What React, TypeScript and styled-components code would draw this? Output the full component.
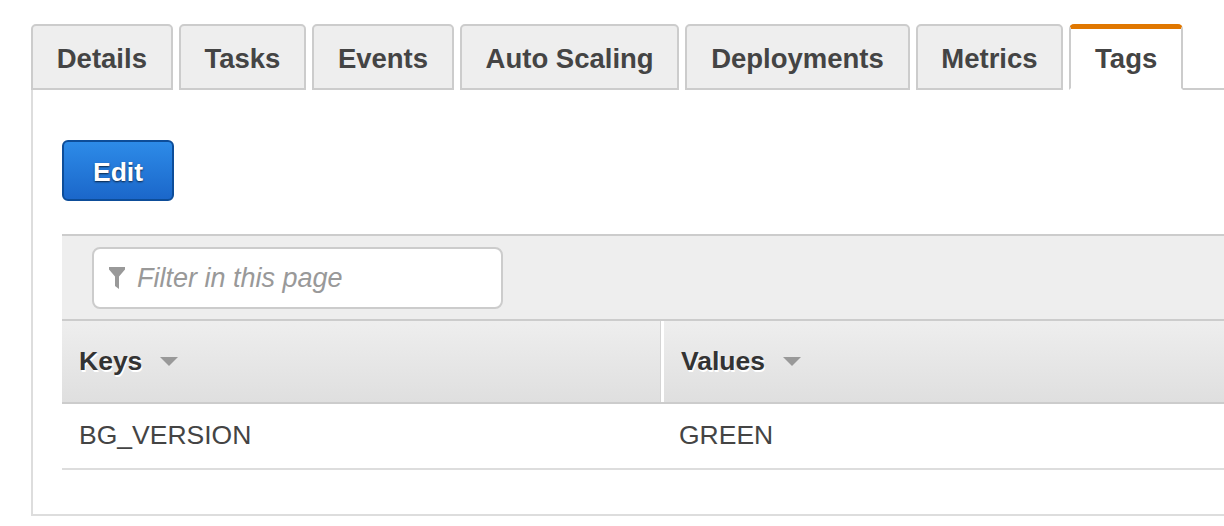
import React from "react";
import styled, { createGlobalStyle } from "styled-components";

const Global = createGlobalStyle`
  html, body { margin: 0; padding: 0; background: #fff; }
  body { width: 1224px; height: 526px; overflow: hidden; font-family: "Liberation Sans", Arial, sans-serif; }
  * { box-sizing: border-box; }
`;

const Page = styled.div`
  padding: 24px 0 0 31px;
  width: 1224px;
`;

const TabBar = styled.div`
  display: flex;
  align-items: stretch;
  height: 66px;
`;

const Tab = styled.div<{ $active?: boolean }>`
  display: flex;
  align-items: center;
  justify-content: center;
  padding: 0 23.75px;
  margin-right: 6px;
  font-size: 27.5px;
  font-weight: bold;
  color: #444;
  background: ${(p) => (p.$active ? "#fff" : "#eee")};
  border: 2px solid #ccc;
  border-top: ${(p) => (p.$active ? "5px solid #e07700" : "2px solid #ccc")};
  border-bottom: ${(p) => (p.$active ? "2px solid #fff" : "2px solid #ccc")};
  border-radius: 5px 5px 0 0;
  padding-top: ${(p) => (p.$active ? "0px" : "3px")};
  line-height: 1;
`;

const Filler = styled.div`
  flex: 1;
  margin-left: -6px;
  border-bottom: 2px solid #ccc;
`;

const Panel = styled.div`
  border-left: 2px solid #ddd;
  border-bottom: 2px solid #ddd;
  padding: 50px 0 44px 29px;
`;

const EditButton = styled.button`
  display: flex;
  align-items: center;
  justify-content: center;
  width: 112px;
  height: 61px;
  border: 2px solid #0d4d99;
  border-radius: 6px;
  background: linear-gradient(#2d8be8, #1b67ca);
  color: #fff;
  font-family: "Liberation Sans", Arial, sans-serif;
  font-size: 26.5px;
  font-weight: bold;
  text-shadow: 0 1px 2px rgba(0, 0, 0, 0.7);
  padding: 4px 0 0;
`;

const Table = styled.div`
  margin-top: 33px;
`;

const FilterBar = styled.div`
  background: #eee;
  border-top: 2px solid #ccc;
  border-bottom: 2px solid #ccc;
  padding: 11px 30px 10px;
`;

const FilterInput = styled.div`
  display: flex;
  align-items: center;
  gap: 12px;
  width: 411px;
  height: 62px;
  background: #fff;
  border: 2px solid #ccc;
  border-radius: 8px;
  padding: 0 0 0 15px;
  color: #999;
  font-size: 27px;
  font-style: italic;
`;

const HeaderRow = styled.div`
  display: grid;
  grid-template-columns: 599px 1fr;
  height: 83px;
  background: linear-gradient(#eeeeee, #dfdfdf);
  border-bottom: 2px solid #ccc;
`;

const HeaderCell = styled.div<{ $divider?: boolean }>`
  display: flex;
  align-items: center;
  gap: 18px;
  padding-left: 17px;
  font-size: 26.5px;
  font-weight: bold;
  color: #333;
  text-shadow: 1px 2px 0 #fff;
  border-left: ${(p) => (p.$divider ? "3px solid #fff" : "none")};
  box-shadow: ${(p) => (p.$divider ? "-1px 0 0 #d4d4d4" : "none")};
`;

const DataRow = styled.div`
  display: grid;
  grid-template-columns: 599px 1fr;
  height: 66px;
  border-bottom: 2px solid #ddd;
`;

const DataCell = styled.div<{ $second?: boolean }>`
  display: flex;
  align-items: center;
  padding-left: ${(p) => (p.$second ? "18px" : "17px")};
  padding-bottom: 2px;
  font-size: 26.5px;
  color: #444;
`;

const Funnel = () => (
  <svg width="16" height="22" viewBox="0 0 16 22">
    <path d="M0 0 H16 V2.5 L10 9.5 V22 L6 19 V9.5 L0 2.5 Z" fill="#999" />
  </svg>
);

const Caret = () => (
  <svg width="18" height="9" viewBox="0 0 18 9">
    <path d="M0 0 H18 L9 9 Z" fill="#999" />
  </svg>
);

const tabs = ["Details", "Tasks", "Events", "Auto Scaling", "Deployments", "Metrics", "Tags"];

export default function App() {
  return (
    <>
      <Global />
      <Page>
        <TabBar>
          {tabs.map((t) => (
            <Tab key={t} $active={t === "Tags"}>
              {t}
            </Tab>
          ))}
          <Filler />
        </TabBar>
        <Panel>
          <EditButton>Edit</EditButton>
          <Table>
            <FilterBar>
              <FilterInput>
                <Funnel />
                <span>Filter in this page</span>
              </FilterInput>
            </FilterBar>
            <HeaderRow>
              <HeaderCell>
                Keys <Caret />
              </HeaderCell>
              <HeaderCell $divider>
                Values <Caret />
              </HeaderCell>
            </HeaderRow>
            <DataRow>
              <DataCell>BG_VERSION</DataCell>
              <DataCell $second>GREEN</DataCell>
            </DataRow>
          </Table>
        </Panel>
      </Page>
    </>
  );
}
